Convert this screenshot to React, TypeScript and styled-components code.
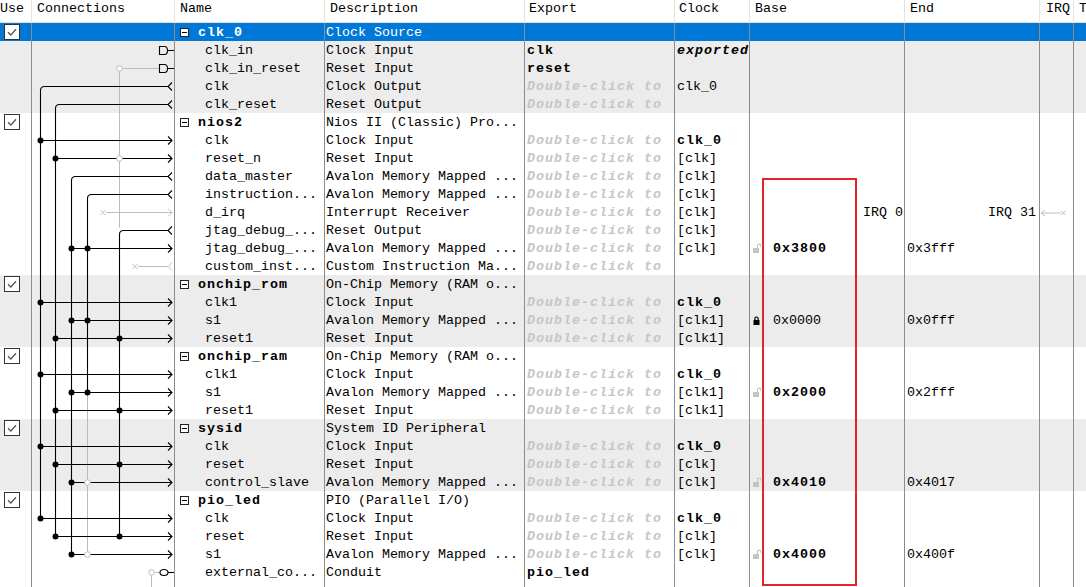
import React from "react";
import styled, { createGlobalStyle, css } from "styled-components";

const Global = createGlobalStyle`
  html, body { margin: 0; padding: 0; background: #fff; overflow: hidden; }
  body {
    font-family: "Liberation Mono", "DejaVu Sans Mono", monospace;
    font-size: 13.33px;
    color: #000;
  }
`;

const COLS = "32px 143px 150px 200px 150px 75px 155px 135px 34px 40px";
const GRID_LINE = "#8c8c8c";
const HINT = "#c6c6c6";
const WIRE_GREY = "#bcbcbc";

const Frame = styled.div`
  position: relative;
  width: 1086px;
  height: 587px;
  overflow: hidden;
  background: #fff;
`;

const HeaderRow = styled.div`
  display: grid;
  grid-template-columns: ${COLS};
  height: 22px;
  border-bottom: 1px solid #e3e3e3;
`;

const HeadCell = styled.div<{ $pad?: number }>`
  padding-left: ${(p) => p.$pad ?? 5}px;
  line-height: 18px;
  border-right: 1px solid #e2e2e2;
  white-space: nowrap;
  overflow: hidden;
`;

const Row = styled.div<{ $bg: string; $sel?: boolean; $h?: number }>`
  display: grid;
  grid-template-columns: ${COLS};
  height: ${(p) => p.$h ?? 18}px;
  background: ${(p) => p.$bg};
  color: ${(p) => (p.$sel ? "#fff" : "#000")};
`;

const Cell = styled.div<{ $pad?: number; $right?: number; $end?: boolean }>`
  display: flex;
  align-items: center;
  justify-content: ${(p) => (p.$end ? "flex-end" : "flex-start")};
  box-sizing: border-box;
  padding: 2px ${(p) => p.$right ?? 0}px 0 ${(p) => p.$pad ?? 0}px;
  border-right: 1px solid ${GRID_LINE};
  white-space: nowrap;
  overflow: hidden;
`;

const UseCell = styled.div`
  display: flex;
  align-items: flex-start;
  padding: 1px 0 0 4px;
  border-right: 1px solid ${GRID_LINE};
`;

type Variant = "n" | "b" | "h" | "bi";

const Txt = styled.span<{ $v?: Variant }>`
  line-height: 16px;
  ${(p) =>
    p.$v === "b" &&
    css`
      font-weight: bold;
      letter-spacing: 1px;
    `}
  ${(p) =>
    p.$v === "bi" &&
    css`
      font-weight: bold;
      font-style: italic;
      letter-spacing: 1px;
    `}
  ${(p) =>
    p.$v === "h" &&
    css`
      font-weight: bold;
      font-style: italic;
      letter-spacing: 1px;
      color: ${HINT};
    `}
`;

const CheckBox = styled.span`
  display: flex;
  width: 16px;
  height: 16px;
  box-sizing: border-box;
  border: 1px solid #333;
  background: #fff;
`;

const Expander = styled.span`
  display: flex;
  align-items: center;
  justify-content: center;
  width: 9px;
  height: 9px;
  margin: -1px 9px 0 0;
  box-sizing: border-box;
  border: 1px solid #222;
  background: #fff;
  &::after {
    content: "";
    width: 5px;
    height: 1px;
    background: #000;
  }
`;

const LockSlot = styled.span`
  display: flex;
  width: 8px;
  height: 10px;
  margin: -2px 12px 0 0;
`;

const Wires = styled.svg`
  position: absolute;
  left: 32px;
  top: 0;
  pointer-events: none;
`;

const Highlight = styled.div`
  position: absolute;
  left: 762px;
  top: 178px;
  width: 95px;
  height: 408px;
  box-sizing: border-box;
  border: 2px solid #e3242b;
  pointer-events: none;
`;

type Txtv = { t: string; v?: Variant };
type RowData = {
  name: string;
  desc: string;
  group?: boolean;
  sel?: boolean;
  exp?: Txtv;
  clock?: Txtv;
  base?: Txtv & { lock: "open" | "closed" };
  end?: string;
  irq?: boolean;
};

const H: Txtv = { t: "Double-click to", v: "h" };
const AV = "Avalon Memory Mapped ...";
const CLK0: Txtv = { t: "clk_0", v: "b" };
const CLK: Txtv = { t: "[clk]" };
const CLK1: Txtv = { t: "[clk1]" };

const rows: RowData[] = [
  { group: true, sel: true, name: "clk_0", desc: "Clock Source" },
  { name: "clk_in", desc: "Clock Input", exp: { t: "clk", v: "b" }, clock: { t: "exported", v: "bi" } },
  { name: "clk_in_reset", desc: "Reset Input", exp: { t: "reset", v: "b" } },
  { name: "clk", desc: "Clock Output", exp: H, clock: { t: "clk_0" } },
  { name: "clk_reset", desc: "Reset Output", exp: H },
  { group: true, name: "nios2", desc: "Nios II (Classic) Pro..." },
  { name: "clk", desc: "Clock Input", exp: H, clock: CLK0 },
  { name: "reset_n", desc: "Reset Input", exp: H, clock: CLK },
  { name: "data_master", desc: AV, exp: H, clock: CLK },
  { name: "instruction...", desc: AV, exp: H, clock: CLK },
  { name: "d_irq", desc: "Interrupt Receiver", exp: H, clock: CLK, irq: true },
  { name: "jtag_debug_...", desc: "Reset Output", exp: H, clock: CLK },
  { name: "jtag_debug_...", desc: AV, exp: H, clock: CLK, base: { t: "0x3800", v: "b", lock: "open" }, end: "0x3fff" },
  { name: "custom_inst...", desc: "Custom Instruction Ma...", exp: H },
  { group: true, name: "onchip_rom", desc: "On-Chip Memory (RAM o..." },
  { name: "clk1", desc: "Clock Input", exp: H, clock: CLK0 },
  { name: "s1", desc: AV, exp: H, clock: CLK1, base: { t: "0x0000", lock: "closed" }, end: "0x0fff" },
  { name: "reset1", desc: "Reset Input", exp: H, clock: CLK1 },
  { group: true, name: "onchip_ram", desc: "On-Chip Memory (RAM o..." },
  { name: "clk1", desc: "Clock Input", exp: H, clock: CLK0 },
  { name: "s1", desc: AV, exp: H, clock: CLK1, base: { t: "0x2000", v: "b", lock: "open" }, end: "0x2fff" },
  { name: "reset1", desc: "Reset Input", exp: H, clock: CLK1 },
  { group: true, name: "sysid", desc: "System ID Peripheral" },
  { name: "clk", desc: "Clock Input", exp: H, clock: CLK0 },
  { name: "reset", desc: "Reset Input", exp: H, clock: CLK },
  { name: "control_slave", desc: AV, exp: H, clock: CLK, base: { t: "0x4010", v: "b", lock: "open" }, end: "0x4017" },
  { group: true, name: "pio_led", desc: "PIO (Parallel I/O)" },
  { name: "clk", desc: "Clock Input", exp: H, clock: CLK0 },
  { name: "reset", desc: "Reset Input", exp: H, clock: CLK },
  { name: "s1", desc: AV, exp: H, clock: CLK, base: { t: "0x4000", v: "b", lock: "open" }, end: "0x400f" },
  { name: "external_co...", desc: "Conduit", exp: { t: "pio_led", v: "b" } },
];

const Check = () => (
  <CheckBox>
    <svg width="14" height="14" viewBox="0 0 14 14">
      <path d="M3 7.2 L5.8 10 L11 4.2" fill="none" stroke="#555" strokeWidth="1.3" />
    </svg>
  </CheckBox>
);

const Lock = ({ open }: { open: boolean }) => (
  <LockSlot>
    {open ? (
      <svg width="8" height="10" viewBox="0 0 8 10">
        <rect x="0" y="5" width="6" height="5" fill="#c4c4c4" />
        <path d="M4.5 5 V2.6 A1.6 1.6 0 0 1 7.7 2.6 V3.8" fill="none" stroke="#c4c4c4" strokeWidth="1.2" />
      </svg>
    ) : (
      <svg width="8" height="10" viewBox="0 0 8 10">
        <rect x="0.5" y="5" width="6" height="5" fill="#000" />
        <path d="M1.9 5 V3.6 A1.6 1.6 0 0 1 5.1 3.6 V5" fill="none" stroke="#000" strokeWidth="1.2" />
      </svg>
    )}
  </LockSlot>
);

const IrqArrow = () => (
  <svg width="30" height="10" viewBox="0 0 30 10">
    <path d="M5 2 L1 5 L5 8 M1 5 H21 M21.5 3 L25.5 7 M25.5 3 L21.5 7" fill="none" stroke={WIRE_GREY} strokeWidth="1" />
  </svg>
);

const y = (i: number) => 32 + 18 * i + 0.5;

function Connections() {
  const bus = (row: number, x: number, end: number) =>
    `M168 ${y(row)} H${x + 4} Q${x} ${y(row)} ${x} ${y(row) + 4} V${y(end)}`;
  const inputs: [number, number][] = [
    [6, 40.5], [7, 55.5], [12, 71.5], [15, 40.5], [16, 71.5], [17, 55.5],
    [19, 40.5], [20, 71.5], [21, 55.5], [23, 40.5], [24, 55.5], [25, 71.5],
    [27, 40.5], [28, 55.5], [29, 71.5],
  ];
  const dots: [number, number][] = [
    [6, 40.5], [7, 55.5], [12, 71.5], [12, 87.5], [15, 40.5], [16, 71.5], [16, 87.5],
    [17, 55.5], [17, 119.5], [19, 40.5], [20, 71.5], [20, 87.5], [21, 55.5], [21, 119.5],
    [23, 40.5], [24, 55.5], [24, 119.5], [25, 71.5], [27, 40.5], [28, 55.5], [28, 119.5], [29, 71.5],
  ];
  const rings: [number, number][] = [[2, 119.5], [7, 119.5], [25, 87.5], [29, 87.5], [30, 151.5]];
  const sinkArrow = (r: number) => `M168 ${y(r) - 4} L172 ${y(r)} L168 ${y(r) + 4}`;
  const srcArrow = (r: number) => `M172 ${y(r) - 4} L168 ${y(r)} L172 ${y(r) + 4}`;
  const cross = (x: number, r: number) =>
    `M${x - 2.5} ${y(r) - 2.5} L${x + 2.5} ${y(r) + 2.5} M${x + 2.5} ${y(r) - 2.5} L${x - 2.5} ${y(r) + 2.5}`;
  const exportD = (r: number) =>
    `M159.5 ${y(r) - 4} H164.5 Q167.5 ${y(r) - 4} 167.5 ${y(r)} Q167.5 ${y(r) + 4} 164.5 ${y(r) + 4} H159.5 Z M167.5 ${y(r)} H174`;

  return (
    <Wires width="142" height="587" viewBox="32 0 142 587">
      <g fill="none" stroke={WIRE_GREY} strokeWidth="1">
        <path d={`M122.5 ${y(2)} H159.5 M119.5 ${y(2) + 3} V${y(11) - 3}`} />
        <path d={`M87.5 ${y(20)} V${y(29) - 3}`} />
        <path d={`M106 ${y(10)} H172 ${sinkArrow(10)} ${cross(103, 10)}`} />
        <path d={`M138 ${y(13)} H168 ${srcArrow(13)} ${cross(135, 13)}`} />
        <path d={`M154.5 ${y(30)} H160 M151.5 ${y(30) + 3} V587`} />
      </g>
      <g fill="none" stroke="#000" strokeWidth="1.1">
        <path d={bus(3, 40.5, 27)} />
        <path d={bus(4, 55.5, 28)} />
        <path d={bus(8, 71.5, 29)} />
        <path d={bus(9, 87.5, 20)} />
        <path d={bus(11, 119.5, 28)} />
        {[3, 4, 8, 9, 11].map((r) => (
          <path key={`s${r}`} d={srcArrow(r)} />
        ))}
        {inputs.map(([r, x]) => (
          <path key={`i${r}`} d={`M${x} ${y(r)} H172 ${sinkArrow(r)}`} />
        ))}
        <path d={exportD(1)} />
        <path d={exportD(2)} />
        <ellipse cx="164" cy={y(30)} rx="4" ry="3" />
        <path d={`M168 ${y(30)} H174`} />
      </g>
      <g fill="#000">
        {dots.map(([r, x]) => (
          <circle key={`d${r}-${x}`} cx={x} cy={y(r)} r="3" />
        ))}
      </g>
      <g fill="#fff" stroke={WIRE_GREY} strokeWidth="1">
        {rings.map(([r, x]) => (
          <circle key={`c${r}-${x}`} cx={x} cy={y(r)} r="2.8" />
        ))}
      </g>
    </Wires>
  );
}

export default function App() {
  let groupIdx = -1;
  return (
    <Frame>
      <Global />
      <HeaderRow>
        <HeadCell $pad={0}>Use</HeadCell>
        <HeadCell>Connections</HeadCell>
        <HeadCell>Name</HeadCell>
        <HeadCell>Description</HeadCell>
        <HeadCell $pad={4}>Export</HeadCell>
        <HeadCell $pad={4}>Clock</HeadCell>
        <HeadCell>Base</HeadCell>
        <HeadCell>End</HeadCell>
        <HeadCell $pad={6}>IRQ</HeadCell>
        <HeadCell>T</HeadCell>
      </HeaderRow>
      {rows.map((r, i) => {
        if (r.group) groupIdx += 1;
        const bg = r.sel ? "#0078d7" : groupIdx % 2 === 0 ? "#ececec" : "#fff";
        return (
          <Row key={i} $bg={bg} $sel={r.sel}>
            <UseCell>{r.group && <Check />}</UseCell>
            <Cell />
            <Cell $pad={r.group ? 5 : 30}>
              {r.group && <Expander />}
              <Txt $v={r.group ? "b" : "n"}>{r.name}</Txt>
            </Cell>
            <Cell $pad={1}>
              <Txt>{r.desc}</Txt>
            </Cell>
            <Cell $pad={2}>{r.exp && <Txt $v={r.exp.v}>{r.exp.t}</Txt>}</Cell>
            <Cell $pad={2}>{r.clock && <Txt $v={r.clock.v}>{r.clock.t}</Txt>}</Cell>
            {r.irq ? (
              <Cell $end $right={1}>
                <Txt>IRQ 0</Txt>
              </Cell>
            ) : (
              <Cell $pad={3}>
                {r.base && (
                  <>
                    <Lock open={r.base.lock === "open"} />
                    <Txt $v={r.base.v}>{r.base.t}</Txt>
                  </>
                )}
              </Cell>
            )}
            {r.irq ? (
              <Cell $end $right={3}>
                <Txt>IRQ 31</Txt>
              </Cell>
            ) : (
              <Cell $pad={2}>{r.end && <Txt>{r.end}</Txt>}</Cell>
            )}
            <Cell>{r.irq && <IrqArrow />}</Cell>
            <Cell />
          </Row>
        );
      })}
      <Row $bg="#fff" $h={10}>
        <UseCell />
        {Array.from({ length: 9 }, (_, k) => (
          <Cell key={k} />
        ))}
      </Row>
      <Connections />
      <Highlight />
    </Frame>
  );
}
